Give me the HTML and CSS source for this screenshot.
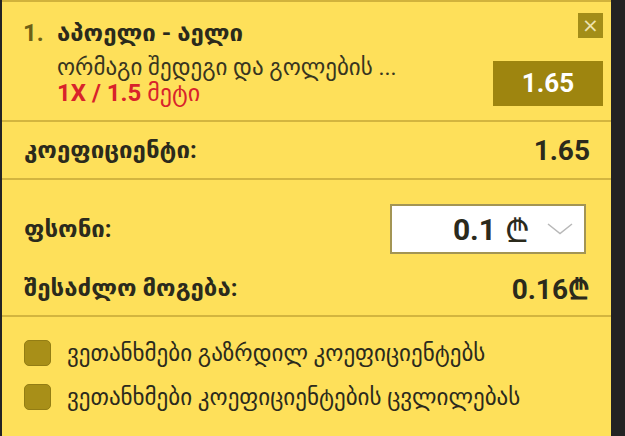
FILE: index.html
```html
<!DOCTYPE html>
<html lang="ka">
<head>
    <meta charset="UTF-8">
    <title>ბილეთი</title>
    <link rel="stylesheet" href="styles.css">
</head>
<body>
    <div class="slip">
        <div class="bet">
            <span class="bet-num">1.</span>
            <div class="bet-info">
                <div class="bet-title">აპოელი - აელი</div>
                <div class="bet-market">ორმაგი შედეგი და გოლების ...</div>
                <div class="bet-pick"><b>1X / 1.5</b> მეტი</div>
            </div>
            <div class="bet-side">
                <button type="button" class="close-btn">&times;</button>
                <div class="odd-box">1.65</div>
            </div>
        </div>

        <div class="row row-odds">
            <span class="label">კოეფიციენტი:</span>
            <span class="value">1.65</span>
        </div>

        <div class="stake">
            <div class="row">
                <span class="label">ფსონი:</span>
                <div class="stake-input">
                    <span class="stake-amount">0.1</span>
                    <span class="lari">₾</span>
                    <svg class="chevron" width="26" height="12" viewBox="0 0 26 12">
                        <path d="M1 1 L13 10.5 L25 1" fill="none" stroke="#b8b8b8" stroke-width="1.5"/>
                    </svg>
                </div>
            </div>
            <div class="row row-win">
                <span class="label">შესაძლო მოგება:</span>
                <span class="value">0.16₾</span>
            </div>
        </div>

        <div class="agree">
            <label class="check"><span class="box"></span>ვეთანხმები გაზრდილ კოეფიციენტებს</label>
            <label class="check"><span class="box"></span>ვეთანხმები კოეფიციენტების ცვლილებას</label>
        </div>
    </div>
</body>
</html>
```

FILE: styles.css
```css
body {
    margin: 0;
    background-color: #232323;
    font-family: Roboto, "DejaVu Sans", sans-serif;
    color: #2b2a1c;
}
.slip {
    width: 609px;
    height: 434px;
    margin-left: 2px;
    background-color: #fee05a;
    border-top: 2px solid #d1b23c;
}
.bet {
    display: flex;
    padding: 13px 8px 14px 21px;
    border-bottom: 2px solid #d3b53f;
}
.bet-num {
    width: 34px;
    font-size: 24px;
    font-weight: bold;
    color: #6e6016;
    line-height: 36px;
}
.bet-info {
    flex: 1;
}
.bet-title {
    font-size: 24px;
    font-weight: bold;
    line-height: 36px;
}
.bet-market {
    margin-top: 4px;
    font-size: 23px;
    line-height: 25px;
    color: #38351f;
}
.bet-pick {
    font-size: 24px;
    line-height: 26px;
    color: #d8232b;
}
.bet-side {
    display: flex;
    flex-direction: column;
    align-items: flex-end;
    justify-content: space-between;
}
.close-btn {
    width: 25px;
    height: 25px;
    margin-top: -2px;
    padding: 0;
    border: none;
    background-color: #a38d18;
    color: #eee3b0;
    font-size: 20px;
    line-height: 25px;
    font-family: "DejaVu Sans", sans-serif;
}
.odd-box {
    width: 110px;
    height: 45px;
    background-color: #9e850f;
    color: #fff;
    font-size: 26px;
    font-weight: bold;
    line-height: 45px;
    text-align: center;
}
.row {
    display: flex;
    align-items: center;
    justify-content: space-between;
    padding: 0 21px 0 22px;
}
.row-odds {
    height: 56px;
    border-bottom: 2px solid #d3b53f;
}
.label {
    font-size: 24px;
    font-weight: bold;
}
.value {
    font-size: 28px;
    font-weight: bold;
}
.stake {
    padding: 24px 0 2px;
    border-bottom: 2px solid #d3b53f;
}
.stake .row {
    height: 50px;
}
.stake .row-win {
    margin-top: 9px;
}
.stake-input {
    display: flex;
    align-items: center;
    justify-content: flex-end;
    box-sizing: border-box;
    width: 196px;
    height: 50px;
    margin-right: 4px;
    background-color: #fff;
    border: 2px solid #a39554;
}
.stake-amount {
    font-size: 30px;
    font-weight: bold;
}
.lari {
    margin-left: 9px;
    font-size: 32px;
    font-family: "DejaVu Sans", sans-serif;
}
.chevron {
    margin: 0 11px 0 17px;
}
.agree {
    padding: 14px 22px;
}
.check {
    display: flex;
    align-items: center;
    height: 44px;
    font-size: 23px;
}
.box {
    box-sizing: border-box;
    width: 27px;
    height: 26px;
    margin-right: 16px;
    background-color: #a88f18;
    border: 1px solid #937d14;
    border-radius: 5px;
}
```
